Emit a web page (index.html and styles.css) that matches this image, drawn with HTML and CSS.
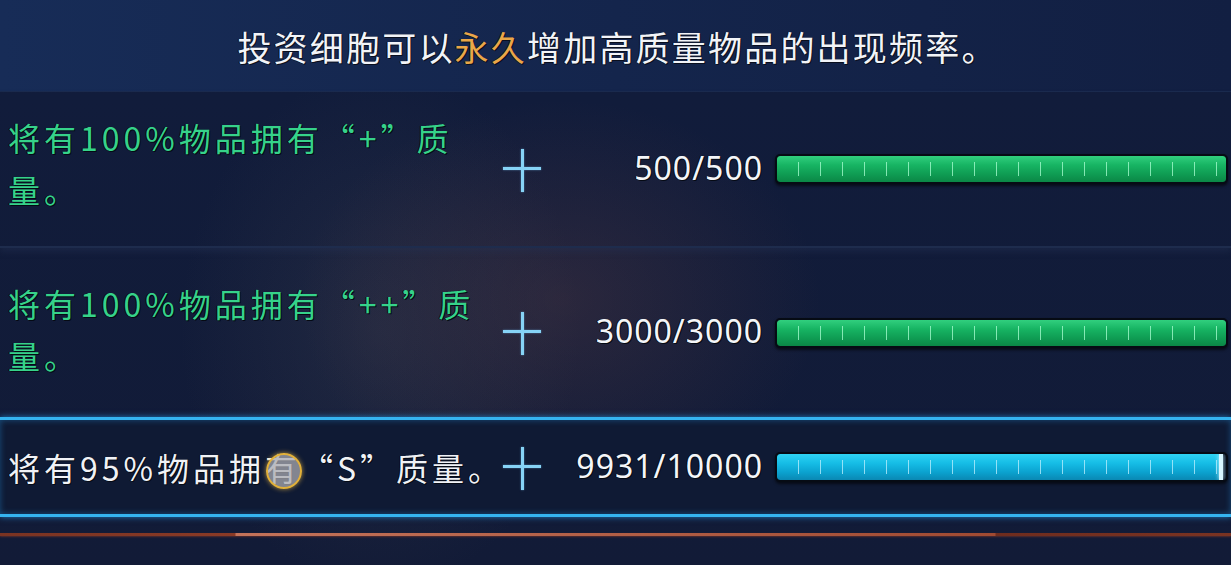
FILE: index.html
```html
<!DOCTYPE html>
<html lang="zh-CN">
  <head>
    <meta charset="UTF-8" />
    <title>细胞投资</title>
    <link rel="stylesheet" href="styles.css">
  </head>
  <body>
    <div class="panel">
      <div class="intro">投资细胞可以<span class="hl">永久</span>增加高质量物品的出现频率。</div>

      <div class="row">
        <div class="desc done">将有100%物品拥有“+”质量。</div>
        <div class="plus"></div>
        <div class="count">500/500</div>
        <div class="bar green"><div class="fill" style="width: 100%"></div></div>
      </div>

      <div class="row second">
        <div class="desc done">将有100%物品拥有“++”质量。</div>
        <div class="plus"></div>
        <div class="count">3000/3000</div>
        <div class="bar green"><div class="fill" style="width: 100%"></div></div>
      </div>

      <div class="row active">
        <div class="desc">将有95%物品拥有“S”质量。</div>
        <div class="plus"></div>
        <div class="count">9931/10000</div>
        <div class="bar cyan"><div class="fill" style="width: 99.3%"></div></div>
        <div class="cursor"></div>
      </div>

      <div class="footer">
        <div class="rule"></div>
      </div>
    </div>
  </body>
</html>
```

FILE: styles.css
```css
body {
  margin: 0;
  padding: 0;
  background: #111b36;
  font-family: "Noto Sans CJK SC", "Noto Sans", sans-serif;
}
.panel {
  width: 1231px;
  height: 565px;
  overflow: hidden;
  display: flex;
  flex-direction: column;
  background:
    radial-gradient(ellipse 260px 200px at 560px 300px, rgba(110, 70, 70, 0.28), transparent),
    radial-gradient(ellipse 200px 260px at 380px 330px, rgba(80, 80, 90, 0.25), transparent),
    linear-gradient(#152449 0, #111c3b 95px, #121b37 100%);
}

/* header line */
.intro {
  height: 92px;
  box-sizing: border-box;
  padding-top: 24px;
  padding-left: 4px;
  text-align: center;
  font-size: 34px;
  line-height: 46px;
  letter-spacing: 2.2px;
  color: #f2f4f8;
  text-shadow: 1px 1px 0 #0a0f1e, -1px 0 0 #0a0f1e;
  background: linear-gradient(90deg, #172c57, #14254c 50%, #121f42);
  border-bottom: 1px solid #1a2a4e;
}
.hl {
  color: #eaa748;
}

/* upgrade rows */
.row {
  position: relative;
  display: grid;
  grid-template-columns: 490px 48px 217px 465px;
  align-items: center;
  padding-left: 8px;
  height: 154px;
  border-bottom: 2px solid #1e2c4d;
  box-shadow: 0 4px 6px rgba(40, 55, 90, 0.35);
}
.row.second {
  height: 169px;
  border-bottom: 0;
  box-shadow: none;
}
.row.active {
  height: 94px;
  border-top: 3px solid #35b4f0;
  border-bottom: 3px solid #35b4f0;
  box-shadow: 0 0 6px rgba(40, 160, 240, 0.7), inset 0 0 6px rgba(40, 160, 240, 0.4);
  background: #0f1a34;
}
.desc {
  font-size: 32px;
  line-height: 52px;
  letter-spacing: 4px;
  color: #f0f2f6;
  text-shadow: 1px 1px 0 #050a14, -1px 0 0 #050a14;
  margin-top: -12px;
}
.row.second .desc {
  margin-top: -8px;
}
.row.active .desc {
  margin-top: 0;
  white-space: nowrap;
}
.desc.done {
  color: #36d28a;
  width: 488px;
}
.plus {
  justify-self: center;
  position: relative;
  width: 38px;
  height: 43px;
  margin-top: 2px;
}
.plus::before,
.plus::after {
  content: "";
  position: absolute;
  background: #86d3f6;
  box-shadow: 0 0 2px rgba(120, 200, 250, 0.6);
}
.plus::before {
  left: 0;
  right: 0;
  top: 18px;
  height: 3px;
}
.plus::after {
  top: 0;
  bottom: 0;
  left: 18px;
  width: 3px;
}
.count {
  text-align: right;
  font-family: "Noto Sans", sans-serif;
  font-size: 32px;
  letter-spacing: 1px;
  color: #f4f6f9;
  text-shadow: 1px 1px 0 #050a14, -1px 0 0 #050a14;
  margin-left: 12px;
  margin-top: -4px;
}
.bar {
  margin-left: 12px;
  height: 30px;
  box-sizing: border-box;
  border: 2px solid #060b14;
  border-radius: 5px;
  background: #0a1326;
  overflow: hidden;
  box-shadow: 0 2px 3px rgba(0, 0, 0, 0.6);
}
.fill {
  position: relative;
  height: 100%;
  border-radius: 3px;
}
.fill::after {
  content: "";
  position: absolute;
  left: 0;
  right: 0;
  top: 6px;
  bottom: 6px;
  background: repeating-linear-gradient(90deg, transparent 0 21px, rgba(170, 255, 210, 0.75) 21px 22px);
}
.green .fill {
  background: linear-gradient(#31cf7e, #17b463 35%, #0f9c53 70%, #0b8746);
}
.cyan .fill {
  background: linear-gradient(#2fd2f2, #16bde6 35%, #0ba2cf 70%, #0a88b3);
}
.cyan .fill::after {
  background: repeating-linear-gradient(90deg, transparent 0 21px, rgba(190, 240, 255, 0.75) 21px 22px);
}
.cyan .fill::before {
  content: "";
  position: absolute;
  right: 0;
  top: 0;
  bottom: 0;
  width: 4px;
  background: #d8f6ff;
  box-shadow: 0 0 4px #bff0ff;
  z-index: 1;
}

/* pointer hovering over the text */
.cursor {
  position: absolute;
  left: 266px;
  top: 33px;
  width: 32px;
  height: 32px;
  border-radius: 50%;
  border: 2px solid #e2b13a;
  background: rgba(170, 170, 175, 0.75);
  box-shadow: 0 0 5px rgba(240, 190, 70, 0.7);
}

.footer {
  flex: 1;
  padding-top: 16px;
}
.rule {
  height: 3px;
  background: linear-gradient(90deg, #7a3322 0, #8a3a26 235px, #c4735a 236px, #a04a32 995px, #6e2c1e 996px, #7a3322 100%);
  box-shadow: 0 1px 2px rgba(150, 60, 40, 0.5);
}
```
